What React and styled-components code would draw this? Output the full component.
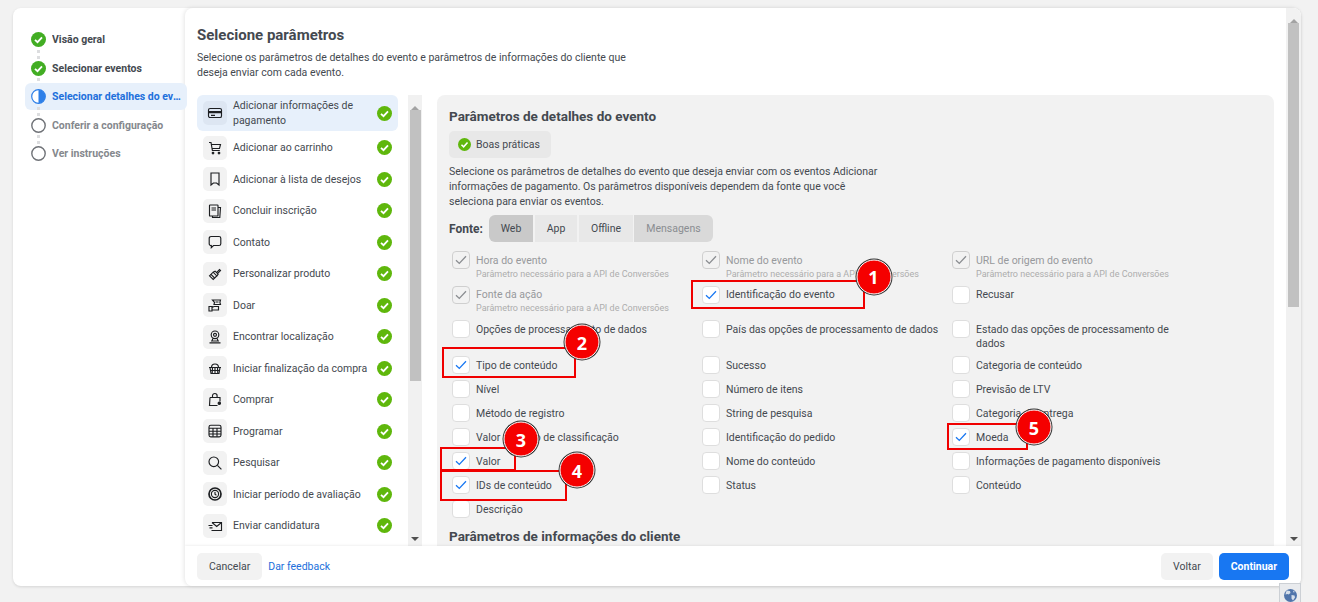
import React from 'react';
import styled, { createGlobalStyle } from 'styled-components';

const GlobalStyle = createGlobalStyle`
    * {
        box-sizing: border-box;
    }

    body {
        margin: 0;
        background: #f2f2f2;
        font-family: Roboto, "Liberation Sans", sans-serif;
        font-size: 10.5px;
        color: #444950;
        overflow: hidden;
    }
`;

const GREEN = '#5fb70c';
const STEP_GREEN = '#42ad23';
const BLUE = '#1877f2';

const CheckDot = ({ size = 15, color = GREEN }) => (
    <svg width={size} height={size} viewBox="0 0 15 15">
        <circle cx="7.5" cy="7.5" r="7.5" fill={color} />
        <path d="M4 7.8l2.5 2.4L11 5.3" fill="none" stroke="#fff" strokeWidth="1.8" />
    </svg>
);

const StepIcon = ({ state }) => {
    if (state === 'done') return <CheckDot color={STEP_GREEN} />;
    if (state === 'active') {
        return (
            <svg width="15" height="15" viewBox="0 0 15 15">
                <circle cx="7.5" cy="7.5" r="6.8" fill="#fff" stroke="#2d7fe8" strokeWidth="1.2" />
                <path d="M7.5 0.7a6.8 6.8 0 0 1 0 13.6z" fill="#2d7fe8" />
            </svg>
        );
    }
    return (
        <svg width="15" height="15" viewBox="0 0 15 15">
            <circle cx="7.5" cy="7.5" r="6.7" fill="#fff" stroke="#6f7277" strokeWidth="1.4" />
        </svg>
    );
};

const iconPaths = {
    card: <><rect x="1.5" y="3.5" width="13" height="9" rx="1.6" /><path d="M1.5 6.5h13M1.5 7.6h13M4 10.3h4" /></>,
    cart: <><path d="M2 2.5h2l1.4 8h7.4M4.4 4.5h9.1l-1 4H5.1" /><circle cx="6" cy="13" r="0.8" /><circle cx="12" cy="13" r="0.8" /></>,
    bookmark: <path d="M4 2h8v12l-2.4-2H6.4L4 14z" />,
    form: <><rect x="2.5" y="2" width="8.5" height="11" rx="0.6" /><path d="M4.5 5h4.5M4.5 7h4.5M11 4.5h2.5l-0.7 10H5.5v-1.5" /></>,
    chat: <path d="M4 2.5h8a1.8 1.8 0 0 1 1.8 1.8v5.4a1.8 1.8 0 0 1-1.8 1.8H6.5L4.3 13.6v-2.1A1.8 1.8 0 0 1 2.2 9.7V4.3A1.8 1.8 0 0 1 4 2.5z" />,
    brush: <><path d="M2.5 9.8l3.6-3.6 3.7 3.7-3.6 3.6z" /><path d="M6.1 6.2l2-1 3 3-1.2 1.7M9.5 6.6l3-3 1 1-3 3M4 8.4l3.6 3.6" /></>,
    donate: <><path d="M2 9.5h3v4.5H2zM5 10.5l2-1h4.5v3.5H5" /><path d="M5.5 3h8l-0.6 2.3 0.6 2.2H7l0.5-2.2zM8.5 5h3" /></>,
    location: <><circle cx="8" cy="5.8" r="3.8" /><circle cx="8" cy="5.8" r="1.5" /><path d="M6 9.5L4.8 12h6.4L10 9.5M2.5 13.8h11" /></>,
    basket: <><path d="M2 7.5h12M3 7.5l1 6h8l1-6M5.5 7.5l-0.3 6M8 7.5v6M10.5 7.5l0.3 6M3.3 10.5h9.4" /><path d="M4.5 7.5A3.5 3.5 0 0 1 11.5 7.5" /></>,
    bag: <><path d="M3 5.5h10v4M3 5.5l-0.5 8h8" /><path d="M5.5 5.5V3.8a2.3 2.3 0 0 1 4.6 0v1.7" /><circle cx="12.3" cy="11.2" r="1.2" fill="#1c1e21" /></>,
    calendar: <><rect x="2" y="2.2" width="12" height="11.6" rx="1.8" /><path d="M2 5.2h12M2 8.2h12M2 11h12M6 5.2v8.6M10 5.2v8.6" /></>,
    search: <><circle cx="6.8" cy="6.8" r="4.8" /><path d="M10.4 10.4l4 4" /></>,
    clock: <><circle cx="8" cy="8" r="6" strokeWidth="1.7" /><circle cx="8" cy="8" r="3.6" /><path d="M8 6v2.2l1.4 1" /></>,
    mail: <><path d="M5 4.5h9.5v8H4.5" /><path d="M5 4.5l4.7 4 4.8-4M1.5 7.5h4M2.5 9.8h3" /></>,
};

const ListIcon = ({ name }) => (
    <svg width="16" height="16" viewBox="0 0 16 16" fill="none" stroke="#1c1e21" strokeWidth="1.15">
        {iconPaths[name]}
    </svg>
);

const steps = [
    { label: 'Visão geral', state: 'done' },
    { label: 'Selecionar eventos', state: 'done' },
    { label: 'Selecionar detalhes do evento', state: 'active' },
    { label: 'Conferir a configuração', state: 'todo' },
    { label: 'Ver instruções', state: 'todo' },
];

const events = [
    { icon: 'card', label: 'Adicionar informações de pagamento', selected: true },
    { icon: 'cart', label: 'Adicionar ao carrinho' },
    { icon: 'bookmark', label: 'Adicionar à lista de desejos' },
    { icon: 'form', label: 'Concluir inscrição' },
    { icon: 'chat', label: 'Contato' },
    { icon: 'brush', label: 'Personalizar produto' },
    { icon: 'donate', label: 'Doar' },
    { icon: 'location', label: 'Encontrar localização' },
    { icon: 'basket', label: 'Iniciar finalização da compra' },
    { icon: 'bag', label: 'Comprar' },
    { icon: 'calendar', label: 'Programar' },
    { icon: 'search', label: 'Pesquisar' },
    { icon: 'clock', label: 'Iniciar período de avaliação' },
    { icon: 'mail', label: 'Enviar candidatura' },
];

const SUB = 'Parâmetro necessário para a API de Conversões';

const params = [
    { label: 'Hora do evento', state: 'locked', sub: SUB },
    { label: 'Nome do evento', state: 'locked', sub: SUB },
    { label: 'URL de origem do evento', state: 'locked', sub: SUB },
    { label: 'Fonte da ação', state: 'locked', sub: SUB },
    { label: 'Identificação do evento', state: 'on' },
    { label: 'Recusar' },
    { label: 'Opções de processamento de dados' },
    { label: 'País das opções de processamento de dados' },
    { label: 'Estado das opções de processamento de dados' },
    { label: 'Tipo de conteúdo', state: 'on' },
    { label: 'Sucesso' },
    { label: 'Categoria de conteúdo' },
    { label: 'Nível' },
    { label: 'Número de itens' },
    { label: 'Previsão de LTV' },
    { label: 'Método de registro' },
    { label: 'String de pesquisa' },
    { label: 'Categoria de entrega' },
    { label: 'Valor máximo de classificação' },
    { label: 'Identificação do pedido' },
    { label: 'Moeda', state: 'on' },
    { label: 'Valor', state: 'on' },
    { label: 'Nome do conteúdo' },
    { label: 'Informações de pagamento disponíveis' },
    { label: 'IDs de conteúdo', state: 'on' },
    { label: 'Status' },
    { label: 'Conteúdo' },
    { label: 'Descrição' },
];

const sources = [
    { label: 'Web', width: 44, kind: 'active' },
    { label: 'App', width: 42 },
    { label: 'Offline', width: 54 },
    { label: 'Mensagens', width: 79, kind: 'disabled' },
];

const marks = [
    { x: 691, y: 280, w: 174, h: 29 },
    { x: 442, y: 347, w: 134, h: 31 },
    { x: 440, y: 447, w: 76, h: 24 },
    { x: 440, y: 470, w: 127, h: 31 },
    { x: 947, y: 423, w: 81, h: 27 },
];

const badges = [
    { n: 1, x: 873.5, y: 276.5 },
    { n: 2, x: 582, y: 342 },
    { n: 3, x: 521, y: 439 },
    { n: 4, x: 577, y: 470 },
    { n: 5, x: 1034, y: 427 },
];

const Scrollbar = ({ thumbHeight }) => (
    <Track>
        <ArrowUp />
        <Thumb $height={thumbHeight} />
        <ArrowDown />
    </Track>
);

const App = () => (
    <Page>
        <GlobalStyle />
        <Card>
            <Sidebar>
                {steps.map((step, i) => (
                    <Step key={step.label} $state={step.state} $last={i === steps.length - 1}>
                        <StepIcon state={step.state} />
                        <StepLabel>{step.label}</StepLabel>
                    </Step>
                ))}
            </Sidebar>
            <Main>
                <MainScroll>
                    <Body>
                        <Title>Selecione parâmetros</Title>
                        <Intro>
                            Selecione os parâmetros de detalhes do evento e parâmetros de informações do cliente que
                            deseja enviar com cada evento.
                        </Intro>
                        <Columns>
                            <EventList>
                                {events.map((event) => (
                                    <EventRow key={event.label} $selected={event.selected}>
                                        <IconTile $selected={event.selected}>
                                            <ListIcon name={event.icon} />
                                        </IconTile>
                                        <EventLabel>{event.label}</EventLabel>
                                        <CheckDot />
                                    </EventRow>
                                ))}
                            </EventList>
                            <ListBar>
                                <Scrollbar thumbHeight={271} />
                            </ListBar>
                            <Panel>
                                <PanelHeading>Parâmetros de detalhes do evento</PanelHeading>
                                <TipButton>
                                    <CheckDot size={13} />
                                    Boas práticas
                                </TipButton>
                                <PanelText>
                                    Selecione os parâmetros de detalhes do evento que deseja enviar com os eventos
                                    Adicionar informações de pagamento. Os parâmetros disponíveis dependem da fonte que
                                    você seleciona para enviar os eventos.
                                </PanelText>
                                <SourceRow>
                                    <SourceLabel>Fonte:</SourceLabel>
                                    <SourceGroup>
                                        {sources.map((source) => (
                                            <SourceTab key={source.label} $width={source.width} $kind={source.kind}>
                                                {source.label}
                                            </SourceTab>
                                        ))}
                                    </SourceGroup>
                                </SourceRow>
                                <ParamGrid>
                                    {params.map((param) => (
                                        <Param key={param.label}>
                                            <Box $state={param.state}>
                                                {param.state && (
                                                    <svg width="12" height="10" viewBox="0 0 12 10" fill="none">
                                                        <path
                                                            d="M1 5.2l3.3 3.2L11 1.3"
                                                            stroke={param.state === 'on' ? BLUE : '#8a8d91'}
                                                            strokeWidth="1.3"
                                                        />
                                                    </svg>
                                                )}
                                            </Box>
                                            <ParamText>
                                                <ParamLabel $locked={param.state === 'locked'}>{param.label}</ParamLabel>
                                                {param.sub && <ParamSub>{param.sub}</ParamSub>}
                                            </ParamText>
                                        </Param>
                                    ))}
                                </ParamGrid>
                                <SecondHeading>Parâmetros de informações do cliente</SecondHeading>
                            </Panel>
                        </Columns>
                    </Body>
                    <PageBar>
                        <Scrollbar thumbHeight={284} />
                    </PageBar>
                </MainScroll>
                <Footer>
                    <FooterButton>Cancelar</FooterButton>
                    <FeedbackLink>Dar feedback</FeedbackLink>
                    <Spacer />
                    <FooterButton>Voltar</FooterButton>
                    <PrimaryButton>Continuar</PrimaryButton>
                </Footer>
            </Main>
        </Card>
        {marks.map((mark) => (
            <RedMark key={`${mark.x}-${mark.y}`} $x={mark.x} $y={mark.y} $w={mark.w} $h={mark.h} />
        ))}
        {badges.map((badge) => (
            <Badge key={badge.n} $x={badge.x} $y={badge.y}>{badge.n}</Badge>
        ))}
        <LanguageTab>
            <svg width="13" height="13" viewBox="0 0 13 13">
                <circle cx="6.5" cy="6.5" r="6.5" fill="#4f74ab" />
                <path d="M3 1.5l3 .5 .5 2-2 1.5-1-.5-2 .5 .5-2.5zM7.5 6l3 .5 .5 2-2 3-1.5-2zM9 1.5l2 1.5-1.5 .5z" fill="#d5deea" />
            </svg>
        </LanguageTab>
    </Page>
);

const Page = styled.div`
    position: relative;
    width: 1318px;
    height: 602px;
    padding: 8px 17px 0 13px;
    overflow: hidden;
`;

const Card = styled.div`
    display: flex;
    height: 578px;
    background: #fff;
    border-radius: 8px;
    box-shadow: 0 1px 3px rgba(0, 0, 0, 0.12);
`;

const Sidebar = styled.nav`
    position: relative;
    z-index: 1;
    flex: 0 0 172px;
    width: 172px;
    padding: 18px 0 0 12px;
`;

const stepColors = { done: '#444950', active: '#216fdb', todo: '#85888d' };

const Step = styled.div`
    position: relative;
    display: flex;
    align-items: center;
    gap: 6px;
    width: 162px;
    height: 27px;
    margin-bottom: 1.5px;
    padding: 0 6px;
    border-radius: 6px;
    color: ${(p) => stepColors[p.$state]};
    background: ${(p) => (p.$state === 'active' ? '#e7f0fb' : 'transparent')};

    &::after {
        content: '';
        display: ${(p) => (p.$last ? 'none' : 'block')};
        position: absolute;
        left: 12px;
        top: 23.5px;
        width: 3px;
        height: 9px;
        background: radial-gradient(circle at 1.5px 1.5px, #dcdddf 1.5px, transparent 1.6px) 0 0 / 3px 6px repeat-y;
    }
`;

const StepLabel = styled.span`
    flex: 1;
    min-width: 0;
    font-weight: 700;
    line-height: 15px;
    white-space: nowrap;
    overflow: hidden;
    text-overflow: ellipsis;
`;

const Main = styled.main`
    flex: 1;
    min-width: 0;
    display: flex;
    flex-direction: column;
    border-radius: 8px;
    background: #fff;
    box-shadow: -1px 0 4px rgba(0, 0, 0, 0.1);
    overflow: hidden;
`;

const MainScroll = styled.div`
    flex: 1;
    min-height: 0;
    display: flex;
`;

const Body = styled.div`
    flex: 1;
    min-width: 0;
    display: flex;
    flex-direction: column;
    padding: 17px 12px 0;
`;

const Title = styled.h1`
    margin: 0;
    font-size: 15px;
    font-weight: 700;
    line-height: 20px;
    color: #444950;
`;

const Intro = styled.p`
    margin: 4.5px 0 15.5px;
    max-width: 440px;
    line-height: 15px;
`;

const Columns = styled.div`
    flex: 1;
    min-height: 0;
    display: flex;
`;

const EventList = styled.ul`
    flex: 0 0 201px;
    margin: 0;
    padding: 0;
    list-style: none;
`;

const EventRow = styled.li`
    display: flex;
    align-items: center;
    min-height: 31.5px;
    margin-bottom: ${(p) => (p.$selected ? '1px' : '0')};
    padding: 3px 6px;
    border-radius: 6px;
    background: ${(p) => (p.$selected ? '#e7f0fb' : 'transparent')};
`;

const IconTile = styled.span`
    flex: 0 0 24px;
    display: flex;
    align-items: center;
    justify-content: center;
    height: 24px;
    border-radius: 5px;
    background: ${(p) => (p.$selected ? '#dde6f2' : '#f2f2f2')};
`;

const EventLabel = styled.span`
    flex: 1;
    min-width: 0;
    margin: 0 3px 0 6px;
    line-height: 15px;
`;

const ListBar = styled.div`
    flex: 0 0 14px;
    display: flex;
    margin: 0 15px 0 10px;
`;

const PageBar = styled.div`
    flex: 0 0 15px;
    display: flex;
`;

const Track = styled.div`
    flex: 1;
    display: flex;
    flex-direction: column;
    align-items: center;
    background: #f1f1f1;
`;

const ArrowUp = styled.span`
    flex: 0 0 15px;
    width: 0;
    height: 15px;
    border-left: 4px solid transparent;
    border-right: 4px solid transparent;
    border-bottom: 4px solid #a3a3a3;
    border-top: 6px solid transparent;
`;

const ArrowDown = styled.span`
    margin-top: auto;
    flex: 0 0 15px;
    width: 0;
    height: 15px;
    border-left: 4px solid transparent;
    border-right: 4px solid transparent;
    border-top: 4px solid #505050;
    border-bottom: 0;
    transform: translateY(6px);
`;

const Thumb = styled.span`
    width: 11px;
    height: ${(p) => p.$height}px;
    background: #c1c1c1;
`;

const Panel = styled.section`
    flex: 1;
    min-width: 0;
    padding: 13px 12px 0;
    background: #f2f2f2;
    border-radius: 8px 8px 0 0;
    overflow: hidden;
`;

const PanelHeading = styled.h2`
    margin: 0;
    font-size: 13.5px;
    font-weight: 700;
    line-height: 16px;
    color: #444950;
`;

const TipButton = styled.div`
    display: flex;
    align-items: center;
    gap: 5px;
    width: 102px;
    height: 27px;
    margin-top: 7px;
    padding-left: 9px;
    border-radius: 5px;
    background: #e8e8e8;
`;

const PanelText = styled.p`
    margin: 5.5px 0 6.5px;
    max-width: 440px;
    line-height: 15px;
`;

const SourceRow = styled.div`
    display: flex;
    align-items: center;
    height: 27px;
`;

const SourceLabel = styled.span`
    flex: 0 0 40px;
    font-size: 12px;
    font-weight: 700;
`;

const SourceGroup = styled.div`
    display: flex;
    gap: 2px;
    border-radius: 6px;
    overflow: hidden;
`;

const sourceBg = { active: '#c9c9c9', disabled: '#d9d9d9' };

const SourceTab = styled.span`
    display: flex;
    align-items: center;
    justify-content: center;
    width: ${(p) => p.$width}px;
    height: 27px;
    margin-right: ${(p) => (p.$width === 54 ? '-1px' : '0')};
    background: ${(p) => sourceBg[p.$kind] || '#e8e8e8'};
    color: ${(p) => (p.$kind === 'disabled' ? '#8a8d91' : '#444950')};
`;

const ParamGrid = styled.div`
    display: grid;
    grid-template-columns: repeat(3, 250px);
    grid-template-rows: 30px 29px 31px repeat(7, 19px);
    row-gap: 5px;
    margin: 9px 0 0 3px;
`;

const ParamText = styled.div`
    padding-top: 3px;
    min-width: 0;
`;

const Param = styled.div`
    display: flex;
    align-items: flex-start;
    gap: 6px;
    padding-right: 10px;

    /* second row sits a pixel higher against its box */
    &:nth-child(n + 4):nth-child(-n + 6) ${ParamText} {
        padding-top: 2px;
    }
`;

const Box = styled.span`
    flex: 0 0 18px;
    display: flex;
    align-items: center;
    justify-content: center;
    height: 18px;
    border-radius: 4px;
    border: 1px solid ${(p) => (p.$state === 'locked' ? '#cfcfcf' : '#dedede')};
    background: ${(p) => (p.$state === 'locked' ? '#f2f2f2' : '#fff')};
`;

const ParamLabel = styled.div`
    line-height: 14px;
    color: ${(p) => (p.$locked ? '#97999c' : '#444950')};
`;

const ParamSub = styled.div`
    font-size: 9px;
    line-height: 12px;
    color: #adadad;
    white-space: nowrap;
`;

const SecondHeading = styled(PanelHeading)`
    margin-top: 9px;
`;

const Footer = styled.footer`
    flex: 0 0 40px;
    display: flex;
    align-items: center;
    gap: 6px;
    padding: 0 12px;
    background: #fff;
    box-shadow: 0 -1px 2px rgba(0, 0, 0, 0.06);
    position: relative;
`;

const FooterButton = styled.button`
    height: 27px;
    padding: 0 12px;
    border: 0;
    border-radius: 5px;
    background: #f2f2f2;
    color: #444950;
    font: inherit;
`;

const PrimaryButton = styled(FooterButton)`
    background: ${BLUE};
    color: #fff;
    font-weight: 700;
`;

const FeedbackLink = styled.a`
    color: #216fdb;
    text-decoration: none;
`;

const Spacer = styled.span`
    flex: 1;
`;

const RedMark = styled.div`
    position: absolute;
    left: ${(p) => p.$x}px;
    top: ${(p) => p.$y}px;
    width: ${(p) => p.$w}px;
    height: ${(p) => p.$h}px;
    border: 2px solid #f00000;
`;

const Badge = styled.div`
    position: absolute;
    left: ${(p) => p.$x}px;
    top: ${(p) => p.$y}px;
    transform: translate(-50%, -50%);
    display: flex;
    align-items: center;
    justify-content: center;
    width: 35px;
    height: 35px;
    border: 1px solid #fff;
    border-radius: 50%;
    background: #f50000;
    box-shadow: 0 0 0 1px #333;
    color: #fff;
    font-family: "Open Sans", sans-serif;
    font-size: 18px;
    font-weight: 700;
`;

const LanguageTab = styled.div`
    position: absolute;
    left: 1279px;
    top: 583px;
    display: flex;
    justify-content: center;
    width: 22px;
    height: 19px;
    padding-top: 5px;
    background: #e9ebee;
    border: 1px solid #ccd0d5;
    border-bottom: 0;
`;

export default App;
